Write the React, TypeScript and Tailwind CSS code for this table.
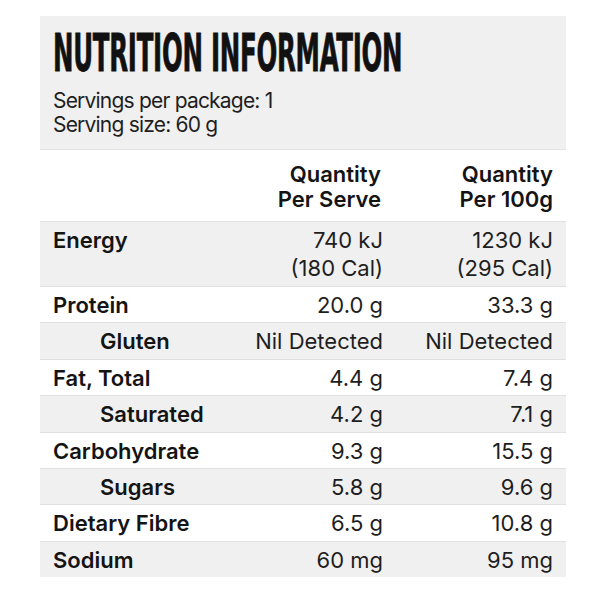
const rows = [
  { label: 'Energy',        serve: ['740 kJ', '(180 Cal)'], per100: ['1230 kJ', '(295 Cal)'], sub: false },
  { label: 'Protein',       serve: ['20.0 g'],       per100: ['33.3 g'],       sub: false },
  { label: 'Gluten',        serve: ['Nil Detected'], per100: ['Nil Detected'], sub: true  },
  { label: 'Fat, Total',    serve: ['4.4 g'],        per100: ['7.4 g'],        sub: false },
  { label: 'Saturated',     serve: ['4.2 g'],        per100: ['7.1 g'],        sub: true  },
  { label: 'Carbohydrate',  serve: ['9.3 g'],        per100: ['15.5 g'],       sub: false },
  { label: 'Sugars',        serve: ['5.8 g'],        per100: ['9.6 g'],        sub: true  },
  { label: 'Dietary Fibre', serve: ['6.5 g'],        per100: ['10.8 g'],       sub: false },
  { label: 'Sodium',        serve: ['60 mg'],        per100: ['95 mg'],        sub: false },
]

export default function App() {
  return (
    <div className="w-[600px] h-[600px] bg-white pt-4 pl-10 text-[#141414]"
      style={{ fontFamily: 'Inter, Roboto, "Liberation Sans", sans-serif' }}>
      <div className="w-[526px]">

        {/* Header */}
        <div className="bg-[#f0f0f0] border-b border-[#e3e3e3] h-[134px] px-[13px] pt-[11px]">
          <div className="h-[52px]">
            <div className="origin-left scale-x-[0.523] whitespace-nowrap text-[52px] leading-[52px] font-bold tracking-[-0.5px] text-[#111] [-webkit-text-stroke:0.8px_#111]"
              style={{ fontFamily: '"DejaVu Sans", sans-serif', fontStretch: 'condensed' }}>
              NUTRITION INFORMATION
            </div>
          </div>
          <div className="mt-[10px] text-[21px] leading-[24px] tracking-[-0.8px] text-[#1e1e1e]">
            <div>Servings per package: 1</div>
            <div>Serving size: 60 g</div>
          </div>
        </div>

        {/* Column headings */}
        <div className="grid grid-cols-[1fr_170px_170px] px-[13px] pt-3 pb-2 h-[71px] bg-white text-[22px] leading-[25px] font-semibold text-right">
          <div />
          <div className="pr-[2px]">Quantity<br />Per Serve</div>
          <div>Quantity<br />Per 100g</div>
        </div>

        {/* Rows */}
        {rows.map((r, i) => (
          <div key={r.label}
            className={`grid grid-cols-[1fr_170px_170px] px-[13px] pt-1 text-[22px] leading-[28px] border-t border-[#e0e0e0] ${r.serve.length > 1 ? 'h-[65px]' : 'h-[36.4px]'} ${i % 2 === 0 ? 'bg-[#f0f0f0]' : 'bg-white'}`}>
            <div className={`font-semibold ${r.sub ? 'pl-[47px]' : ''}`}>{r.label}</div>
            <div className="text-right text-[#1e1e1e]">
              {r.serve.map(v => <div key={v}>{v}</div>)}
            </div>
            <div className="text-right text-[#1e1e1e]">
              {r.per100.map(v => <div key={v}>{v}</div>)}
            </div>
          </div>
        ))}
      </div>
    </div>
  )
}
